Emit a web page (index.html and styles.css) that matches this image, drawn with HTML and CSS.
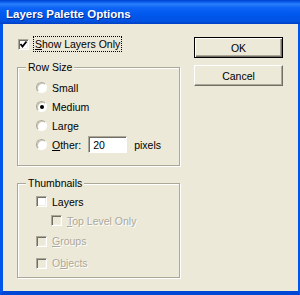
FILE: index.html
```html
<!DOCTYPE html>
<html>
<head>
<meta charset="utf-8">
<link rel="stylesheet" href="styles.css">
</head>
<body>
<div class="window">
  <div class="titlebar"><span class="title">Layers Palette Options</span></div>
  <div class="frame">
    <div class="left">
      <div class="check-row first">
        <span class="cb"><svg width="9" height="9" viewBox="0 0 9 9"><polyline points="1.5,4 3.5,6.5 7.5,1.5" fill="none" stroke="#000" stroke-width="1.8"/></svg></span>
        <span class="lbl focus"><u>S</u>how Layers Only</span>
      </div>
      <fieldset class="group rowsize">
        <legend>Row Size</legend>
        <div class="opt"><span class="radio"></span><span class="lbl">Small</span></div>
        <div class="opt"><span class="radio on"></span><span class="lbl">Medium</span></div>
        <div class="opt"><span class="radio"></span><span class="lbl">Large</span></div>
        <div class="opt other"><span class="radio"></span><span class="lbl"><u>O</u>ther:</span><span class="field">20</span><span class="lbl">pixels</span></div>
      </fieldset>
      <fieldset class="group thumbs">
        <legend>Thumbnails</legend>
        <div class="opt"><span class="cb"></span><span class="lbl">Layers</span></div>
        <div class="opt sub dis"><span class="cb"></span><span class="lbl"><u>T</u>op Level Only</span></div>
        <div class="opt tall dis"><span class="cb"></span><span class="lbl"><u>G</u>roups</span></div>
        <div class="opt tall dis"><span class="cb"></span><span class="lbl">O<u>b</u>jects</span></div>
      </fieldset>
    </div>
    <div class="right">
      <button class="btn default">OK</button>
      <button class="btn">Cancel</button>
    </div>
  </div>
</div>
</body>
</html>
```
FILE: styles.css
```css
html, body {
  margin: 0;
  padding: 0;
}
body {
  width: 300px;
  height: 295px;
  overflow: hidden;
  font-family: "Liberation Sans", Arial, sans-serif;
  font-size: 10.5px;
  color: #000;
}
.window {
  height: 295px;
  display: flex;
  flex-direction: column;
}
.titlebar {
  flex: none;
  height: 24px;
  box-sizing: border-box;
  padding: 7px 0 0 6px;
  background: linear-gradient(#0042c8 0px, #0a5cf0 2px, #2a7ffa 4px, #0d63f5 8px, #0058ee 14px, #0052e2 21px, #0040c4 24px);
}
.title {
  color: #fff;
  font-weight: bold;
  font-size: 11.5px;
  line-height: 14px;
  text-shadow: 1px 1px 0 #0a2a8c;
}
.frame {
  flex: 1;
  display: flex;
  background: #ece9d8;
  border-left: 3px solid #0055ea;
  border-right: 2px solid #0055ea;
  border-bottom: 4px solid #0047d6;
}
.left {
  width: 164px;
  padding-left: 14px;
}
.check-row {
  display: flex;
  align-items: center;
  height: 16px;
  margin-top: 12px;
  padding-left: 1px;
}
.cb {
  flex: none;
  width: 11px;
  height: 11px;
  box-sizing: border-box;
  border: 1px solid;
  border-color: #aca899 #fff #fff #aca899;
  box-shadow: inset 1px 1px 0 #716f64, inset -1px -1px 0 #f1efe2;
  background: #fff;
  display: flex;
  align-items: center;
  justify-content: center;
}
.cb svg {
  display: block;
}
.check-row .lbl {
  margin-left: 4px;
}
.lbl {
  line-height: 14px;
  white-space: nowrap;
}
.focus {
  border: 1px dotted #000;
  padding: 0 1px;
}
.group {
  margin: 0;
  padding: 0 0 0 18px;
  width: 163px;
  box-sizing: border-box;
  border: 1px solid #aca899;
  box-shadow: 1px 1px 0 #fff, inset 1px 1px 0 #fff;
}
.group legend {
  margin-left: -10px;
  padding: 0 2px;
  line-height: 14px;
  background: #ece9d8;
}
.rowsize {
  margin-top: 8px;
  padding-top: 4px;
  padding-bottom: 11px;
}
.opt {
  display: flex;
  align-items: center;
  height: 19px;
}
.opt .lbl {
  margin-left: 5px;
}
.radio {
  flex: none;
  width: 11px;
  height: 11px;
  box-sizing: border-box;
  border-radius: 50%;
  border: 1px solid;
  border-color: #aca899 #fff #fff #aca899;
  box-shadow: inset 1px 1px 0 #c9c6b8;
  background: #fff;
  display: flex;
  align-items: center;
  justify-content: center;
}
.radio.on::after {
  content: "";
  width: 4px;
  height: 4px;
  border-radius: 50%;
  background: #000;
}
.field {
  margin-left: 7px;
  width: 39px;
  height: 17px;
  box-sizing: border-box;
  border: 1px solid;
  border-color: #aca899 #fff #fff #aca899;
  box-shadow: inset 1px 1px 0 #716f64;
  background: #fff;
  padding: 1px 0 0 4px;
  line-height: 14px;
}
.other .field + .lbl {
  margin-left: 7px;
}
.thumbs {
  margin-top: 10px;
  padding-top: 2px;
  padding-bottom: 3px;
}
.opt.sub {
  padding-left: 15px;
}
.opt.tall {
  height: 22px;
}
.dis .cb {
  background: #ece9d8;
}
.dis .lbl {
  color: #aca899;
  text-shadow: 1px 1px 0 #fff;
}
.right {
  display: flex;
  flex-direction: column;
  gap: 7px;
  padding-top: 13px;
  margin-left: 13px;
}
.btn {
  width: 89px;
  height: 21px;
  margin: 0;
  padding: 0;
  font-family: "Liberation Sans", Arial, sans-serif;
  font-size: 10.5px;
  color: #000;
  background: #ece9d8;
  border: 1px solid;
  border-color: #fff #716f64 #716f64 #fff;
  box-shadow: inset -1px -1px 0 #aca899;
}
.btn.default {
  border: 1px solid #000;
  box-shadow: inset 1px 1px 0 #fff, inset -1px -1px 0 #716f64, inset -2px -2px 0 #aca899;
}
```
